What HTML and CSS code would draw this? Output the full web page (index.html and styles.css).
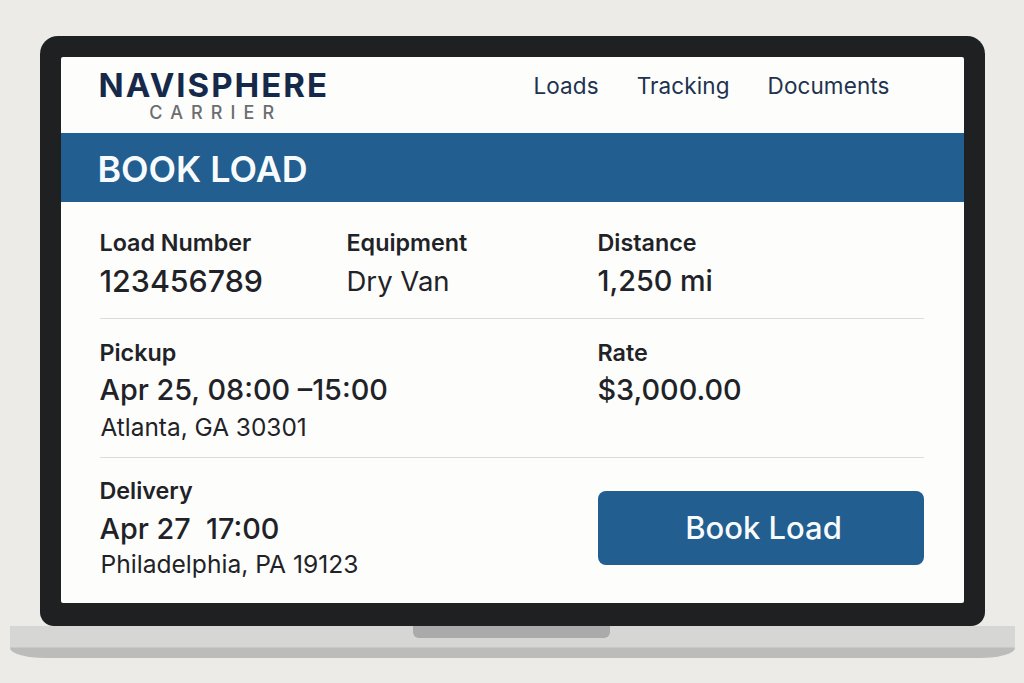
FILE: index.html
```html
<!DOCTYPE html>
<html>
<head>
    <link rel="stylesheet" href="styles.css">
</head>
<body>
    <div class="laptop">
        <div class="bezel">
            <div class="screen">
                <header class="topbar">
                    <div class="logo">
                        <div class="logo-name">NAVISPHERE</div>
                        <div class="logo-sub">CARRIER</div>
                    </div>
                    <nav class="nav">
                        <a>Loads</a>
                        <a>Tracking</a>
                        <a>Documents</a>
                    </nav>
                </header>
                <h1 class="banner">BOOK LOAD</h1>
                <div class="details">
                    <div class="row row-top">
                        <div>
                            <div class="label">Load Number</div>
                            <div class="value strong">123456789</div>
                        </div>
                        <div>
                            <div class="label">Equipment</div>
                            <div class="value light">Dry Van</div>
                        </div>
                        <div>
                            <div class="label">Distance</div>
                            <div class="value">1,250 mi</div>
                        </div>
                    </div>
                    <div class="row row-pickup">
                        <div class="wide">
                            <div class="label">Pickup</div>
                            <div class="value">Apr 25, 08:00 –15:00</div>
                            <div class="place">Atlanta, GA 30301</div>
                        </div>
                        <div>
                            <div class="label">Rate</div>
                            <div class="value">$3,000.00</div>
                        </div>
                    </div>
                    <div class="row row-delivery">
                        <div class="wide">
                            <div class="label">Delivery</div>
                            <div class="value">Apr 27&nbsp; 17:00</div>
                            <div class="place">Philadelphia, PA 19123</div>
                        </div>
                        <button class="book">Book Load</button>
                    </div>
                </div>
            </div>
        </div>
        <div class="base">
            <div class="notch"></div>
        </div>
    </div>
</body>
</html>
```
FILE: styles.css
```css
* {
    box-sizing: border-box;
}

body {
    margin: 0;
    height: 683px;
    overflow: hidden;
    background-color: #ecebe7;
    font-family: Inter, "Liberation Sans", sans-serif;
    color: #1f2328;
}

.laptop {
    padding-top: 36px;
    display: flex;
    flex-direction: column;
    align-items: center;
}

.bezel {
    width: 945px;
    height: 590px;
    padding: 21px;
    background-color: #1e2021;
    border-radius: 18px 18px 14px 14px;
}

.screen {
    height: 546px;
    background-color: #fdfdfb;
    border-radius: 2px;
    overflow: hidden;
}

.topbar {
    height: 76px;
    padding: 0 74px 0 38px;
    display: flex;
    align-items: center;
    justify-content: space-between;
}

.logo-name {
    font-size: 33px;
    line-height: 34px;
    font-weight: 700;
    letter-spacing: 2px;
    color: #16294a;
}

.logo-sub {
    padding-left: 4px;
    font-size: 18px;
    line-height: 21px;
    font-weight: 500;
    letter-spacing: 8.1px;
    text-align: center;
    color: #6b6d70;
}

.nav {
    display: flex;
    gap: 38px;
    margin-bottom: 20px;
    font-size: 22.5px;
    letter-spacing: 0.1px;
    color: #1d3350;
}

.banner {
    margin: 0;
    height: 69px;
    padding: 3px 0 0 37px;
    display: flex;
    align-items: center;
    background-color: #225e8f;
    color: #f8fbfd;
    font-size: 35.8px;
    font-weight: 600;
}

.details {
    padding: 0 40px 0 39px;
}

.row {
    display: grid;
    grid-template-columns: 247px 251px 1fr;
    border-bottom: 1px solid #dcdcd8;
}

.wide {
    grid-column: span 2;
}

.row-top {
    height: 117px;
    padding-top: 27px;
}

.row-pickup {
    height: 139px;
    padding-top: 20px;
}

.row-delivery {
    padding-top: 19px;
    border-bottom: 0;
}

.label {
    font-size: 23.3px;
    line-height: 28px;
    font-weight: 600;
}

.value {
    margin-top: 7px;
    font-size: 28.8px;
    line-height: 34px;
    font-weight: 450;
}

.strong {
    font-size: 30.4px;
    font-weight: 500;
}

.light {
    font-size: 27.5px;
    font-weight: 400;
}

.row-pickup .value {
    margin-top: 6px;
}

.place {
    margin-top: 3px;
    padding-left: 1px;
    font-size: 24.6px;
    line-height: 30px;
}

.row-pickup .place {
    margin-top: 5px;
    font-size: 24.4px;
}

.book {
    margin-top: 14px;
    height: 74px;
    padding: 0 0 2px 6px;
    border: 0;
    border-radius: 8px;
    background-color: #225e8f;
    color: #f8fbfd;
    font-family: inherit;
    font-size: 31px;
    font-weight: 500;
}

.base {
    position: relative;
    width: 1005px;
    height: 32px;
    background: linear-gradient(#d6d6d5 21px, #bcbcbb 22px);
    border-radius: 0 0 35px 35px / 0 0 10px 10px;
}

.notch {
    position: absolute;
    left: 403px;
    top: 0;
    width: 197px;
    height: 12px;
    background-color: #a9aaa9;
    border-radius: 0 0 6px 6px;
}
```
